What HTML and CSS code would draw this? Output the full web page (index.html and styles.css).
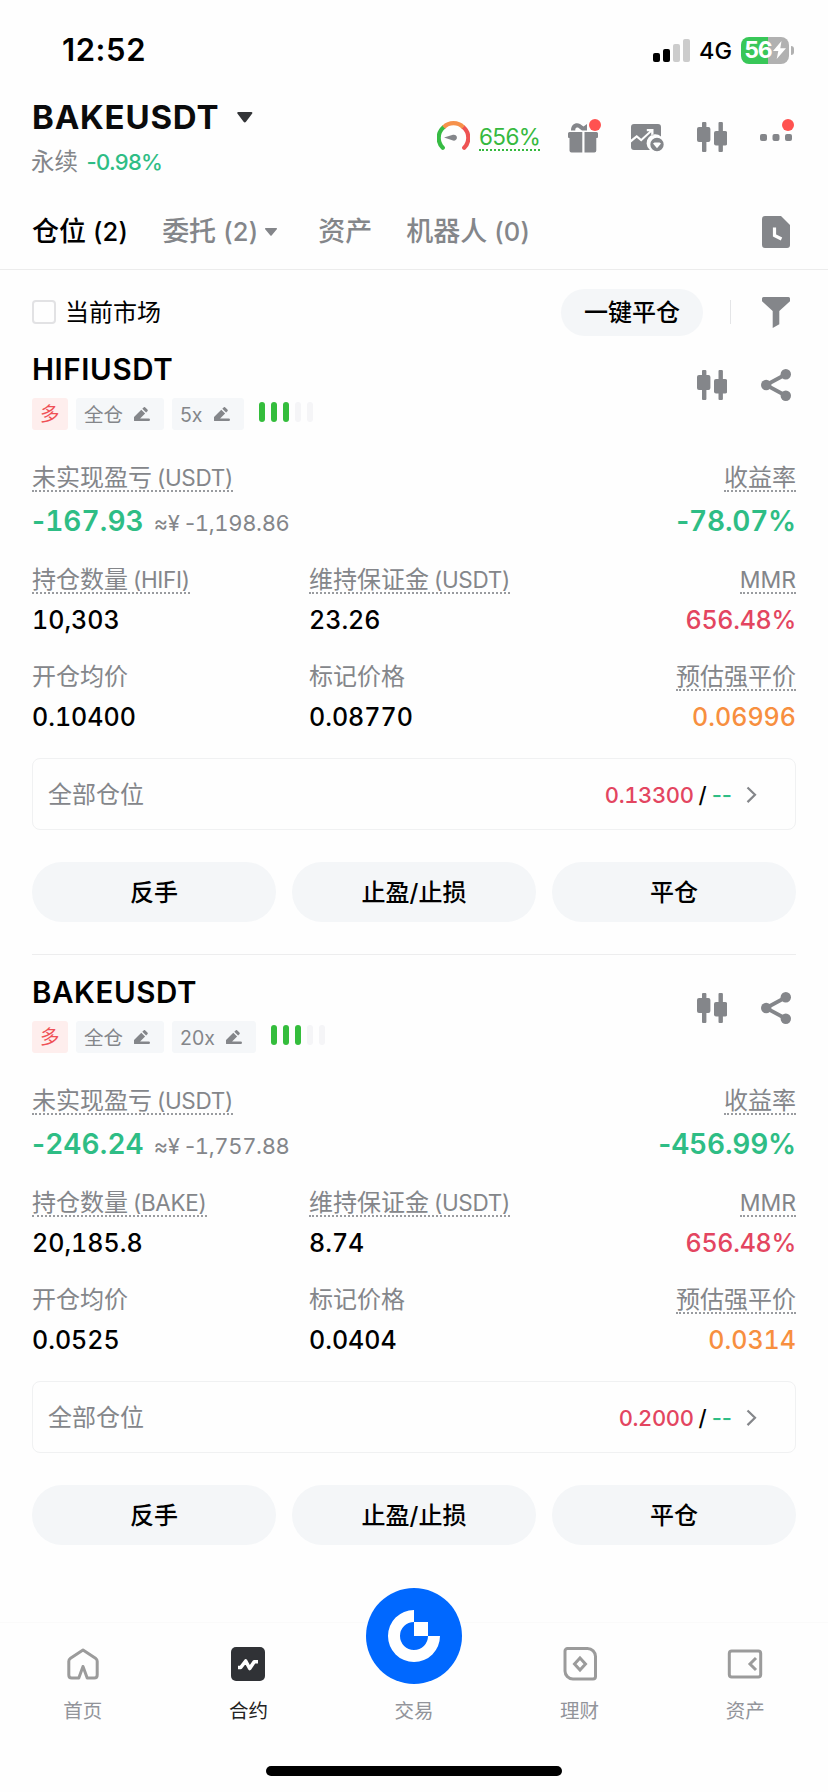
FILE: index.html
```html
<!DOCTYPE html>
<html lang="zh-CN">
<head>
<meta charset="utf-8">
<title>BAKEUSDT</title>
<link rel="stylesheet" href="styles.css">
</head>
<body>
<svg class="defs" aria-hidden="true">
  <symbol id="candles" viewBox="0 0 30 30">
    <rect x="5" y="0" width="4.4" height="30" rx="1"/><rect x="0" y="5" width="13.4" height="15" rx="2"/>
    <rect x="21.5" y="0" width="4.4" height="30" rx="1"/><rect x="17" y="9" width="13.2" height="14.4" rx="2"/>
  </symbol>
  <symbol id="share" viewBox="0 0 30 32">
    <path d="M25 5.3 5 16l20 10.700" fill="none" stroke="currentColor" stroke-width="3.800"/>
    <circle cx="5.200" cy="16" r="5.200"/><circle cx="24.800" cy="5.300" r="5.200"/><circle cx="24.800" cy="26.700" r="5.200"/>
  </symbol>
  <symbol id="pencil" viewBox="0 0 16 15">
    <path d="M0 13.600V10l7.300-7.300 3.800 3.800-5 5h8.600a1.200 1.200 0 0 1 0 2.600H.6a.6.6 0 0 1-.6-.5ZM8.300 1.700 9.600.4a1.200 1.200 0 0 1 1.700 0l2.100 2.100a1.200 1.200 0 0 1 0 1.700l-1.300 1.300Z"/>
  </symbol>
  <symbol id="chevron" viewBox="0 0 11 18">
    <path d="m1.500 1.500 7.500 7.300-7.500 7.300" fill="none" stroke="currentColor" stroke-width="2.200"/>
  </symbol>
</svg>
<div class="screen">
  <div class="status">
    <span class="clock">12:52</span>
    <div class="status-right">
      <svg class="signal" width="37" height="23" viewBox="0 0 37 23"><rect x="0" y="14" width="7" height="9" rx="2"/><rect x="10" y="10" width="7" height="13" rx="2"/><rect x="20" y="5" width="7" height="18" rx="2" fill="#ccc"/><rect x="30" y="0" width="7" height="23" rx="2" fill="#ccc"/></svg>
      <span class="network">4G</span>
      <div class="battery"><span>56</span><svg width="13" height="18" viewBox="0 0 13 18"><path d="M8.500 0 0 10h5.300L3.700 18 13 7.300H7.300Z" fill="#fff"/></svg></div>
      <i class="battery-tip"></i>
    </div>
  </div>

  <header class="header">
    <div class="pair">
      <div class="pair-name">BAKEUSDT<svg width="16" height="11" viewBox="0 0 16 11"><path d="M1.200 0h13.200a1 1 0 0 1 .8 1.600L9 9.800a1.500 1.500 0 0 1-2.400 0L.4 1.600A1 1 0 0 1 1.200 0Z" fill="#333538"/></svg></div>
      <div class="pair-sub">永续 <span>-0.98%</span></div>
    </div>
    <div class="tools">
      <svg class="gauge" width="33" height="30" viewBox="0 0 33 30" fill="none" stroke-width="4.200">
        <path d="M5.800 26.800A14 14 0 0 1 6.700 6.200" stroke="#36bb43" stroke-linecap="round"/>
        <path d="M26.300 6.200A14 14 0 0 1 27.200 26.800" stroke="#ee5353" stroke-linecap="round"/>
        <path d="M6.700 6.200A14 14 0 0 1 26.300 6.200" stroke="#f6914b"/>
        <path d="m7 16.600 9-2.800a3 3 0 1 1 0 5.700Z" fill="#84868a"/>
      </svg>
      <span class="ratio">656%</span>
      <div class="badged gift"><svg width="30" height="31" viewBox="0 0 30 31">
        <path d="M1.500 10h12.800v20.500H3.500a2 2 0 0 1-2-2V16H1a1 1 0 0 1-1-1v-3.500A1.500 1.500 0 0 1 1.500 10ZM16.500 10h12a1.500 1.500 0 0 1 1.500 1.500V15a1 1 0 0 1-1 1h-.7v12.500a2 2 0 0 1-2 2h-9.800Z"/>
        <path d="M3 8.500C3 2 8 .2 12 2l3.500 2.500L19 2v6.500h-5L10 5.600c-2-.8-3 .9-2.700 2.900Z"/></svg></div>
      <svg class="chart" width="33" height="29" viewBox="0 0 33 29">
        <path d="M3 1h24a3 3 0 0 1 3 3v9.500a8.500 8.500 0 0 0-11.500 13L19 27H3a3 3 0 0 1-3-3v-4.500l5.700-4.700 4.500 3.700 10-9.300v3h2.300V6h-6.700v2.300h2.600l-8.200 7.500-4.500-3.700L0 16.500V4a3 3 0 0 1 3-3Z"/>
        <path d="M26 14.800a6.700 6.700 0 1 1 0 13.400 6.700 6.700 0 0 1 0-13.400Zm-4 5.700 4 4.700 4-4.700-1.500-1h-5Z" fill-rule="evenodd"/></svg>
      <svg class="candles" width="30" height="30"><use href="#candles"/></svg>
      <div class="badged more"><svg width="32" height="7" viewBox="0 0 32 7"><rect width="7" height="7" rx="2"/><rect x="12.500" width="7" height="7" rx="2"/><rect x="25" width="7" height="7" rx="2"/></svg></div>
    </div>
  </header>

  <nav class="tabs">
    <span class="tab active">仓位<b>(2)</b></span>
    <span class="tab orders">委托<b>(2)</b><svg width="12" height="8" viewBox="0 0 12 8"><path d="M.8 0h10.400a.7.7 0 0 1 .6 1.200L6.600 7.500a.8.8 0 0 1-1.200 0L.2 1.200A.7.7 0 0 1 .8 0Z"/></svg></span>
    <span class="tab assets">资产</span>
    <span class="tab">机器人<b>(0)</b></span>
    <svg class="history" width="28" height="32" viewBox="0 0 28 32"><path d="M3 0h16l9 9v20a3 3 0 0 1-3 3H3a3 3 0 0 1-3-3V3a3 3 0 0 1 3-3Z"/><path d="M12.500 11.500v8l7 3.500" fill="none" stroke="#fff" stroke-width="3.200"/></svg>
  </nav>

  <div class="filter">
    <i class="checkbox"></i><span>当前市场</span>
    <button class="close-all">一键平仓</button>
    <i class="sep"></i>
    <svg width="28" height="31" viewBox="0 0 28 31"><path d="M1.500 0h25A1.500 1.500 0 0 1 28 1.500v2.800L17.300 14v13.300L10.700 31V14L0 4.300V1.500A1.500 1.500 0 0 1 1.500 0Z"/></svg>
  </div>

  <section class="card">
    <div class="card-head">
      <div>
        <h2>HIFIUSDT</h2>
        <div class="tags"><span class="tag long">多</span><span class="tag">全仓<svg width="16" height="15"><use href="#pencil"/></svg></span><span class="tag">5x<svg width="16" height="15"><use href="#pencil"/></svg></span>
          <span class="bars"><i></i><i></i><i></i><i></i><i></i></span></div>
      </div>
      <div class="card-icons"><svg width="30" height="30"><use href="#candles"/></svg><svg width="30" height="32"><use href="#share"/></svg></div>
    </div>
    <div class="pnl">
      <div><div class="label tip">未实现盈亏<b>(USDT)</b></div><div class="big"><b>-</b>167.93<span>≈¥ <b>-</b>1,198.86</span></div></div>
      <div><div class="label tip">收益率</div><div class="big"><b>-</b>78.07%</div></div>
    </div>
    <div class="stats">
      <div><div class="label tip">持仓数量<b>(HIFI)</b></div><div class="value">10,303</div></div>
      <div><div class="label tip">维持保证金<b>(USDT)</b></div><div class="value">23.26</div></div>
      <div><div class="label tip latin">MMR</div><div class="value red">656.48%</div></div>
      <div><div class="label">开仓均价</div><div class="value">0.10400</div></div>
      <div><div class="label">标记价格</div><div class="value">0.08770</div></div>
      <div><div class="label tip">预估强平价</div><div class="value orange">0.06996</div></div>
    </div>
    <div class="tpsl"><span>全部仓位</span><div class="levels"><span class="red">0.13300</span><span class="slash">/</span><span class="green">--</span><svg width="11" height="18"><use href="#chevron"/></svg></div></div>
    <div class="actions"><button>反手</button><button>止盈/止损</button><button>平仓</button></div>
  </section>

  <section class="card">
    <div class="card-head">
      <div>
        <h2>BAKEUSDT</h2>
        <div class="tags"><span class="tag long">多</span><span class="tag">全仓<svg width="16" height="15"><use href="#pencil"/></svg></span><span class="tag">20x<svg width="16" height="15"><use href="#pencil"/></svg></span>
          <span class="bars"><i></i><i></i><i></i><i></i><i></i></span></div>
      </div>
      <div class="card-icons"><svg width="30" height="30"><use href="#candles"/></svg><svg width="30" height="32"><use href="#share"/></svg></div>
    </div>
    <div class="pnl">
      <div><div class="label tip">未实现盈亏<b>(USDT)</b></div><div class="big"><b>-</b>246.24<span>≈¥ <b>-</b>1,757.88</span></div></div>
      <div><div class="label tip">收益率</div><div class="big"><b>-</b>456.99%</div></div>
    </div>
    <div class="stats">
      <div><div class="label tip">持仓数量<b>(BAKE)</b></div><div class="value">20,185.8</div></div>
      <div><div class="label tip">维持保证金<b>(USDT)</b></div><div class="value">8.74</div></div>
      <div><div class="label tip latin">MMR</div><div class="value red">656.48%</div></div>
      <div><div class="label">开仓均价</div><div class="value">0.0525</div></div>
      <div><div class="label">标记价格</div><div class="value">0.0404</div></div>
      <div><div class="label tip">预估强平价</div><div class="value orange">0.0314</div></div>
    </div>
    <div class="tpsl"><span>全部仓位</span><div class="levels"><span class="red">0.2000</span><span class="slash">/</span><span class="green">--</span><svg width="11" height="18"><use href="#chevron"/></svg></div></div>
    <div class="actions"><button>反手</button><button>止盈/止损</button><button>平仓</button></div>
  </section>

  <footer class="bottom">
    <div class="nav">
      <div class="nav-item"><svg width="36" height="36" viewBox="0 0 36 36" fill="none" stroke="#9b9b9b" stroke-width="3" stroke-linejoin="round"><path d="m18 4 12.500 8.200q1.700 1.200 1.700 3V29q0 3-3 3h-7L18 20.500 13.800 32h-7q-3 0-3-3V15.200q0-1.800 1.700-3Z"/></svg><span>首页</span></div>
      <div class="nav-item on"><svg width="36" height="36" viewBox="0 0 36 36"><rect x="1" y="1" width="34" height="34" rx="5" fill="#303236"/><path d="M8 21.500h2.700l5-6.500 4 7.500 4.500-6.800H28" fill="none" stroke="#fff" stroke-width="3.600" stroke-linejoin="round"/></svg><span>合约</span></div>
      <div class="nav-item trade"><svg width="96" height="96" viewBox="0 0 96 96"><circle cx="48" cy="48" r="48" fill="#0068ff"/><path d="M48 22v12a14 14 0 1 0 14 14h12a26 26 0 1 1-26-26Z" fill="#fff"/><path d="M48 34h14v14H48Z" fill="#fff"/></svg><span>交易</span></div>
      <div class="nav-item"><svg width="36" height="36" viewBox="0 0 36 36" fill="none" stroke="#9b9b9b" stroke-width="3"><path d="M5.500 2.500h20a8 8 0 0 1 8 8v20a2.500 2.500 0 0 1-2.500 2.500H11a8 8 0 0 1-8-8V5a2.500 2.500 0 0 1 2.500-2.500Z"/><path d="m18 12 5.500 6-5.500 6-5.500-6Z"/></svg><span>理财</span></div>
      <div class="nav-item"><svg width="36" height="36" viewBox="0 0 36 36" fill="none" stroke="#9b9b9b" stroke-width="3"><rect x="2.300" y="5" width="31.400" height="26" rx="2.500"/><path d="m29 12-6 6 6 6"/></svg><span>资产</span></div>
    </div>
    <i class="home-bar"></i>
  </footer>
</div>
</body>
</html>
```
FILE: styles.css
```css
* { box-sizing: border-box; }
body {
  margin: 0;
  background: #fefefe;
  color: #000;
  font-family: Inter, "Noto Sans CJK SC", sans-serif;
}
svg { display: block; fill: currentColor; flex: none; }
svg[fill="none"] { fill: none; }
b { font-weight: inherit; }
button { border: 0; padding: 1px 0 0; background: #f4f6f8; color: #000; font: 500 24px/30px Inter, "Noto Sans CJK SC", sans-serif; }
.defs { position: absolute; width: 0; height: 0; }
.screen { width: 828px; height: 1792px; display: flex; flex-direction: column; }

.status { height: 100px; display: flex; justify-content: space-between; padding: 32px 34px 0 62px; }
.clock { font-size: 31px; line-height: 36px; font-weight: 600; letter-spacing: 0.6px; }
.status-right { display: flex; align-items: center; height: 36px; }
.signal { margin-right: 9px; }
.network { font-size: 23.5px; font-weight: 500; width: 42px; line-height: 36px; padding-top: 2px; }
.battery { width: 48px; height: 27px; border-radius: 8px; background: linear-gradient(90deg, #38c758 56%, #b1b1b1 56%); display: flex; align-items: center; justify-content: center; gap: 1px; color: #fff; font-size: 23px; font-weight: 700; letter-spacing: -1px; line-height: 27px; }
.battery-tip { width: 3px; height: 9px; margin-left: 2px; border-radius: 0 3px 3px 0; background: #b1b1b1; }

.header { height: 92px; display: flex; justify-content: space-between; padding: 0 36px 0 32px; color: #84868a; }
.pair-name { display: flex; align-items: center; gap: 18px; font-size: 33px; line-height: 34px; font-weight: 700; letter-spacing: 0.8px; color: #0b0b0c; }
.pair-sub { font-size: 23.5px; line-height: 30px; margin: 13px 0 0 -1px; }
.pair-sub span { font-size: 22px; margin-left: 2px; color: #2ebd85; letter-spacing: -0.7px; font-weight: 500; }
.tools { display: flex; align-items: center; height: 74px; }
.gauge { margin-bottom: 3px; }
.ratio { margin: 2px 0 0 9px; width: 61px; font-size: 22.5px; letter-spacing: -0.6px; line-height: 24px; color: #36b93f; border-bottom: 2px dotted #36b93f; }
.badged { position: relative; }
.badged::after { content: ""; position: absolute; width: 12px; height: 12px; border-radius: 50%; background: #ff5250; }
.gift { margin-left: 28px; }
.gift::after { right: -3px; top: -3px; }
.chart { margin-left: 33px; }
.candles { margin-left: 33px; }
.more { margin-left: 33px; }
.more::after { right: -2px; top: -15px; }

.tabs { height: 78px; border-bottom: 1px solid #ececec; display: flex; align-items: center; padding: 3px 38px 0 32px; color: #84868a; font-size: 27px; line-height: 36px; font-weight: 500; }
.tab { display: flex; align-items: baseline; margin-right: 34px; }
.tab b { font-size: 25.5px; margin-left: 7px; letter-spacing: 0.2px; }
.tab.active { color: #000; }
.orders { align-items: center; margin-right: 41px; }
.orders svg { margin-left: 7px; }
.history { margin-left: auto; }

.filter { height: 84px; display: flex; align-items: center; padding: 0 38px 0 32px; font-size: 24px; line-height: 24px; color: #84868a; }
.filter span { color: #000; margin-left: 9px; padding-top: 2px; }
.checkbox { width: 24px; height: 24px; border: 2px solid #e2e2e4; border-radius: 4px; }
.close-all { width: 142px; height: 47px; border-radius: 24px; margin-left: auto; }
.sep { width: 1px; height: 24px; background: #e4e5e7; margin: 0 31px 0 27px; }

.card { margin: 0 32px; padding-bottom: 32px; }
.card + .card { border-top: 1px solid #ededee; padding-top: 22px; }
.card-head { display: flex; justify-content: space-between; color: #84868a; }
h2 { margin: 0; font-size: 29.5px; line-height: 31px; font-weight: 600; letter-spacing: 0.6px; color: #000; }
.tags { display: flex; gap: 8px; margin-top: 13px; }
.tag { height: 32px; display: flex; align-items: center; gap: 11px; padding: 1px 14px 0 8px; border-radius: 3px; background: #f5f7f9; font-size: 19.5px; line-height: 30px; }
.tag.long { width: 36px; padding: 0 0 0 8px; background: #feeeed; color: #ef5055; }
.bars { display: flex; gap: 6px; margin: 4px 0 0 7px; }
.bars i { width: 6px; height: 20px; border-radius: 3px; background: #34bd3c; }
.bars i:nth-child(n+4) { background: #f5f5f7; }
.card-icons { display: flex; align-items: center; gap: 34px; height: 32px; margin: 15px 5px 0 0; }

.pnl { display: flex; justify-content: space-between; margin-top: 36px; }
.pnl > :last-child, .stats > :nth-child(3n) { text-align: right; }
.label { display: block; width: fit-content; height: 26px; font-size: 24px; line-height: 24px; color: #84868a; white-space: nowrap; }
.pnl > :last-child .label, .stats > :nth-child(3n) .label { margin-left: auto; }
.label b { font-size: 22.5px; letter-spacing: -0.3px; margin-left: 5px; }
.label.tip { border-bottom: 2px dotted #999b9f; }
.label.latin { font-size: 23px; }
.big, .value, .levels .red { font-variant-numeric: tabular-nums; }
.big { margin-top: 12px; height: 34px; font-size: 28px; line-height: 34px; font-weight: 600; letter-spacing: 0.1px; color: #2ebd85; }
.big b { font-variant-numeric: normal; }
.big span { margin-left: 10px; font-size: 22px; font-weight: 400; letter-spacing: -0.35px; color: #84868a; }
.pnl > :last-child .big { letter-spacing: -0.2px; }
.stats { display: grid; grid-template-columns: 277px 1fr auto; row-gap: 30px; margin-top: 30px; }
.value { margin-top: 11px; font-size: 25px; line-height: 30px; font-weight: 500; }
.value.red { letter-spacing: -0.3px; }
.red { color: #e34560; }
.orange { color: #f78f3f; }
.green { color: #2ebd85; }

.tpsl { height: 72px; margin-top: 26px; padding: 2px 38px 0 15px; border: 1px solid #f0f1f2; border-radius: 8px; display: flex; align-items: center; justify-content: space-between; font-size: 24px; line-height: 30px; color: #84868a; }
.levels { display: flex; align-items: center; font-size: 22px; line-height: 30px; font-weight: 500; }
.levels .red { letter-spacing: -0.4px; }
.slash { margin: 0 5px; color: #000; }
.levels svg { margin-left: 14px; }
.actions { display: grid; grid-template-columns: repeat(3, 1fr); gap: 16px; margin-top: 32px; }
.actions button { height: 60px; border-radius: 30px; }

.bottom { margin-top: auto; height: 170px; border-top: 1px solid #fafafa; display: flex; flex-direction: column; align-items: center; }
.nav { width: 100%; display: grid; grid-template-columns: repeat(5, 1fr); height: 143px; }
.nav-item { display: flex; flex-direction: column; align-items: center; padding-top: 23px; color: #92949a; font-size: 19.5px; line-height: 24px; }
.nav-item span { margin-top: 17px; }
.nav-item.on { color: #222; }
.trade svg { margin-top: -58px; }
.trade span { margin-top: 15px; }
.home-bar { width: 296px; height: 10px; border-radius: 5px; background: #000; }
```
